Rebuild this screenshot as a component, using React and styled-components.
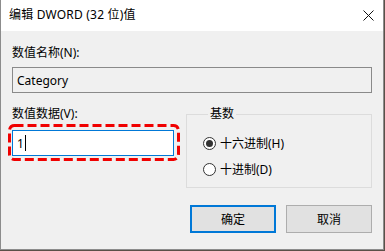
import React from "react"
import styled, { createGlobalStyle } from "styled-components"

const GlobalStyle = createGlobalStyle`
  html, body {
    margin: 0;
    padding: 0;
    background: #5a5048;
  }
  body {
    font-family: "Noto Sans", "Noto Sans CJK SC", sans-serif;
    font-size: 12px;
    color: #000;
  }
`

const Frame = styled.div`
  box-sizing: border-box;
  width: 384px;
  height: 250px;
  background: #f0f0f0;
  border: 1px solid #8c8c8c;
  border-top: none;
  display: flex;
  flex-direction: column;
`

const TitleBar = styled.div`
  height: 31px;
  flex: 0 0 31px;
  background: #fff;
  display: flex;
  align-items: center;
  justify-content: space-between;
  padding: 0 9px 0 8px;
`

const Title = styled.span`
  font-size: 12px;
  line-height: 16px;
  margin-top: -1px;
  letter-spacing: 0.2px;
`

const CloseIcon = () => (
  <svg width="11" height="11" viewBox="0 0 11 11" style={{ marginTop: -1 }}>
    <path d="M0.5 0.5 L10.5 10.5 M10.5 0.5 L0.5 10.5" stroke="#111" strokeWidth="1" fill="none" />
  </svg>
)

const Body = styled.div`
  padding: 0 11px 0 11px;
  display: flex;
  flex-direction: column;
`

const Label = styled.div`
  line-height: 16px;
  height: 16px;
  margin-top: ${(p) => p.$top || 0}px;
  white-space: nowrap;
`

const ReadonlyBox = styled.div`
  box-sizing: border-box;
  height: 26px;
  margin-top: 6px;
  border: 1px solid #8a8a8a;
  background: #f0f0f0;
  display: flex;
  align-items: center;
  padding-left: 4px;
`

const Row = styled.div`
  display: grid;
  grid-template-columns: 162px 1fr;
  column-gap: 12px;
  margin-top: 13px;
`

const Column = styled.div`
  display: flex;
  flex-direction: column;
`

const Highlight = styled.div`
  position: relative;
  margin-top: 8px;
`

const DashedMark = styled.svg`
  position: absolute;
  top: -6px;
  left: -4px;
  width: calc(100% + 11px);
  height: calc(100% + 11px);
  overflow: visible;
  pointer-events: none;
`

const Input = styled.div`
  box-sizing: border-box;
  height: 26px;
  border: 1px solid #0078d7;
  background: #fff;
  display: flex;
  align-items: center;
  padding-left: 4px;
`

const Caret = styled.span`
  display: inline-block;
  width: 1px;
  height: 16px;
  background: #000;
  margin-left: 1px;
`

const Group = styled.fieldset`
  margin: 0;
  padding: 8px 10px 4px 16px;
  border: 1px solid #dcdcdc;
  height: 82px;
  box-sizing: border-box;
  min-width: 0;
`

const Legend = styled.legend`
  padding: 0 2px;
  margin-left: 5px;
  line-height: 16px;
`

const RadioRow = styled.div`
  height: 26px;
  display: flex;
  align-items: center;
  gap: 4px;
`

const RadioCircle = styled.span`
  box-sizing: border-box;
  width: 13px;
  height: 13px;
  border-radius: 50%;
  border: 1px solid #333;
  background: #fff;
  display: flex;
  align-items: center;
  justify-content: center;
  &::after {
    content: "";
    display: ${(p) => (p.$checked ? "block" : "none")};
    width: 7px;
    height: 7px;
    border-radius: 50%;
    background: #333;
  }
`

const Buttons = styled.div`
  display: flex;
  justify-content: flex-end;
  gap: 10px;
  margin-top: 17px;
`

const Button = styled.div`
  box-sizing: border-box;
  width: 86px;
  height: 28px;
  background: #e1e1e1;
  border: ${(p) => (p.$primary ? "2px solid #0078d7" : "1px solid #adadad")};
  display: flex;
  align-items: center;
  justify-content: center;
  font-size: 12px;
`

export default function App() {
  return (
    <>
      <GlobalStyle />
      <Frame>
        <TitleBar>
          <Title>编辑 DWORD (32 位)值</Title>
          <CloseIcon />
        </TitleBar>
        <Body>
          <Label $top={14}>数值名称(N):</Label>
          <ReadonlyBox>Category</ReadonlyBox>
          <Row>
            <Column>
              <Label>数值数据(V):</Label>
              <Highlight>
                <Input>
                  1<Caret />
                </Input>
                <DashedMark>
                  <rect
                    x="1.5"
                    y="1.5"
                    width="169"
                    height="34"
                    rx="5"
                    fill="none"
                    stroke="#f00000"
                    strokeWidth="3"
                    strokeDasharray="9 4"
                  />
                </DashedMark>
              </Highlight>
            </Column>
            <Group>
              <Legend>基数</Legend>
              <RadioRow>
                <RadioCircle $checked />
                十六进制(H)
              </RadioRow>
              <RadioRow>
                <RadioCircle />
                十进制(D)
              </RadioRow>
            </Group>
          </Row>
          <Buttons>
            <Button $primary>确定</Button>
            <Button>取消</Button>
          </Buttons>
        </Body>
      </Frame>
    </>
  )
}
